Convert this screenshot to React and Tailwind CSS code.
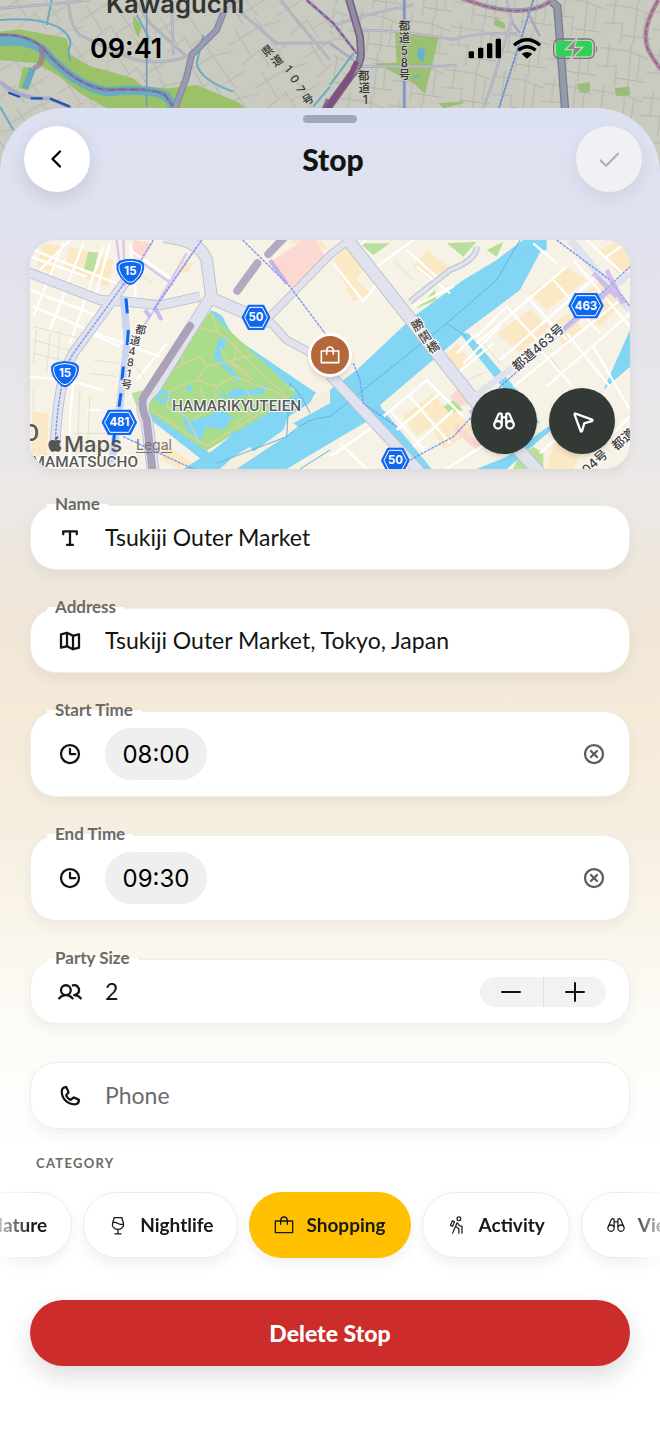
import { useState } from 'react';
import {
  PiBinoculars,
  PiBinocularsBold,
  PiCaretLeftBold,
  PiCheckBold,
  PiClockBold,
  PiLeaf,
  PiMapTrifoldBold,
  PiNavigationArrowBold,
  PiPersonSimpleHike,
  PiPhoneBold,
  PiTextTBold,
  PiUsersBold,
  PiWine,
  PiXCircleBold,
} from 'react-icons/pi';
import { FaApple } from 'react-icons/fa';

const CJK = "Inter, 'Noto Sans CJK JP', sans-serif";

function BagIcon({ className, weight = 4 }) {
  return (
    <svg viewBox="0 0 60 60" fill="none" stroke="currentColor" strokeWidth={weight} strokeLinecap="round" strokeLinejoin="round" className={className} aria-hidden="true">
      <path d="M4 18H56V53H4Z" />
      <path d="M20 28V18Q20 6 30 6T40 18V28" />
    </svg>
  );
}

function StatusIcons() {
  return (
    <svg viewBox="0 0 396 72" className="h-6 w-[132px]" aria-label="Signal, Wi-Fi and battery">
      <rect x="2" y="43" width="16" height="21" rx="4" />
      <rect x="30" y="32" width="16" height="32" rx="4" />
      <rect x="57" y="19" width="16" height="45" rx="4" />
      <rect x="83" y="5" width="16" height="59" rx="4" />
      <g fill="none" stroke="#000" strokeWidth="10">
        <path d="M138 25Q177 -8 216 25" />
        <path d="M151 40Q177 18 203 40" />
      </g>
      <path d="M161 51Q177 39 193 51L177 65Z" />
      <rect x="257" y="6" width="122" height="58" rx="17" fill="none" stroke="#777b76" strokeWidth="4" />
      <rect x="264" y="12" width="108" height="46" rx="11" fill="#30d158" />
      <path d="M384 26Q392 35 384 45Z" fill="#777b76" />
      <path d="M327 3L292 38H316L308 68L344 31H320Z" fill="#8a8a86" stroke="#c5d0bd" strokeWidth="4" />
    </svg>
  );
}

function BackdropMap() {
  return (
    <svg viewBox="0 0 1980 558" preserveAspectRatio="xMidYMin slice" className="h-[186px] w-full [grid-area:1/1]" aria-hidden="true">
      <defs>
        <pattern id="mesh" width="150" height="130" patternUnits="userSpaceOnUse" patternTransform="rotate(8)">
          <path d="M0 20H90L150 35M0 75L60 70V130M30 0V75M95 0L100 130M60 105H150M125 30V100" fill="none" stroke="#b3b4ae" strokeWidth="3" />
        </pattern>
        <pattern id="mesh-slant" width="170" height="150" patternUnits="userSpaceOnUse" patternTransform="rotate(-32)">
          <path d="M0 30H110L170 50M0 100L70 90V150M40 0V95M110 0L120 150M70 120H170" fill="none" stroke="#b6b7b1" strokeWidth="3" />
        </pattern>
      </defs>
      <rect width="1980" height="558" fill="#c9cac0" />
      <rect width="1000" height="558" fill="url(#mesh-slant)" />
      <rect x="1000" width="980" height="558" fill="url(#mesh)" />

      <path d="M0 95L60 88L200 115L212 165L270 198L400 235L430 260L505 265L590 255L720 310L740 330H330L240 280L180 230L110 190L0 180Z" fill="#9bc169" />
      <path d="M70 200L105 205L85 270L55 265ZM400 45L425 80L415 115L400 80Z" fill="#9bc169" />
      <path d="M0 125Q80 115 130 150Q220 255 320 275Q460 262 500 290L525 325" fill="none" stroke="#68adc0" strokeWidth="28" />
      <path d="M0 105Q80 100 130 145Q220 255 320 270Q460 262 495 285L520 320" fill="none" stroke="#7b86ad" strokeWidth="10" />
      <path d="M0 105Q80 100 130 145Q220 255 320 270Q460 262 495 285L520 320" fill="none" stroke="#8b4d80" strokeWidth="3" strokeDasharray="24 10" />
      <path d="M122 140Q138 190 100 206" fill="none" stroke="#95708d" strokeWidth="16" opacity=".6" />
      <path d="M98 205L75 265" stroke="#68a9bd" strokeWidth="20" />
      <g fill="none" stroke="#69acc2" strokeWidth="6">
        <path d="M0 60Q120 50 180 85Q225 115 205 150L210 185M140 75L155 0M0 320L40 390M610 105L590 190Q600 240 700 275M940 320L990 260M410 45L445 110L440 190" />
      </g>
      <g fill="none" stroke="#a9a9bd" strokeWidth="8">
        <path d="M0 25L180 10L270 0M205 0Q210 80 240 105Q350 160 410 180Q480 195 560 170M405 0L450 70L560 170M515 0L520 165M680 0L830 130L990 128M840 0L990 180M660 40L720 0" />
      </g>
      <g fill="none" stroke="#c3c4c4" strokeWidth="3">
        <path d="M0 25L180 10L270 0M205 0Q210 80 240 105Q350 160 410 180Q480 195 560 170M405 0L450 70L560 170M515 0L520 165M680 0L830 130L990 128M840 0L990 180M660 40L720 0" />
      </g>
      <path d="M440 0V320" stroke="#7898ba" strokeWidth="5" />
      <path d="M0 245Q60 300 150 295L215 325" fill="none" stroke="#a7aaca" strokeWidth="11" />
      <path d="M25 278L60 291M92 295L128 295M150 296L210 320" stroke="#2255ae" strokeWidth="7" />
      <path d="M670 40L650 90L575 165L560 230L525 325" fill="none" stroke="#80829c" strokeWidth="20" />
      <path d="M670 40L650 90L575 165L560 230L525 325" fill="none" stroke="#999bb2" strokeWidth="14" />
      <path d="M975 335L990 300" stroke="#7c7a96" strokeWidth="26" />

      <path d="M1185 95L1317 112L1275 282L1235 245L1155 205L1120 190L1190 188Z" fill="#9bc071" />
      <path d="M1485 52L1515 72V88L1482 75ZM1730 252L1770 246V276L1740 278ZM1845 264L1888 260L1890 286L1848 288ZM1315 310L1390 304V310L1330 325Z" fill="#9bbd78" />
      <path d="M1252 155Q1265 130 1275 150L1270 185Q1250 180 1252 155ZM1235 240Q1240 222 1260 228Z" fill="#68b2cb" />
      <g fill="none" stroke="#a9aac0" strokeWidth="8">
        <path d="M1080 90Q1200 90 1360 118Q1450 95 1550 100M990 80Q1100 40 1240 15M1520 0L1535 60L1480 240L1450 325M1050 200L1290 200L1370 195M1535 65L1560 100M990 130L1060 180M1580 30L1620 110" />
      </g>
      <g fill="none" stroke="#c3c4c6" strokeWidth="3">
        <path d="M1080 90Q1200 90 1360 118Q1450 95 1550 100M990 80Q1100 40 1240 15M1520 0L1535 60L1480 240L1450 325M1050 200L1290 200L1370 195" />
      </g>
      <path d="M1213 0V330" stroke="#a0abc8" strokeWidth="11" />
      <path d="M1213 0V330" stroke="#6f8cc4" strokeWidth="4" />
      <path d="M1600 0L1495 330" stroke="#9fb0d0" strokeWidth="7" />
      <path d="M1600 0L1495 330" stroke="#5577bb" strokeWidth="3" strokeDasharray="8 4" />
      <path d="M990 255L1060 160" stroke="#69acc2" strokeWidth="6" />
      <path d="M1045 -10L1080 110L1083 160Q1085 190 1050 230L975 335" fill="none" stroke="#786581" strokeWidth="24" />
      <path d="M1045 -10L1080 110L1083 160Q1085 190 1050 230L975 335" fill="none" stroke="#938ba4" strokeWidth="14" />
      <path d="M1070 185L1050 230L975 335" fill="none" stroke="#7f4f80" strokeWidth="16" />
      <path d="M920 0L1000 70L1070 160" fill="none" stroke="#8b8db5" strokeWidth="9" />
      <path d="M920 0L1000 70L1070 160" fill="none" stroke="#a3447c" strokeWidth="4" strokeDasharray="16 8" />
      <path d="M1650 0L1672 20L1695 325" fill="none" stroke="#78808f" strokeWidth="25" />
      <path d="M1650 0L1672 20L1695 325" fill="none" stroke="#939ba8" strokeWidth="17" />
      <path d="M1380 -8Q1560 65 1650 5M1975 0Q1920 90 1945 150Q1960 180 1985 210" fill="none" stroke="#a391a3" strokeWidth="14" />
      <path d="M1460 16Q1560 46 1640 14M1985 130V200" fill="none" stroke="#69acc2" strokeWidth="5" />
      <path d="M1380 -8Q1560 65 1650 5M1975 0Q1920 90 1945 150Q1960 180 1985 210" fill="none" stroke="#b84b7d" strokeWidth="4" strokeDasharray="18 6" />

      <text x="318" y="38" fontSize="77" fontWeight="600" fill="#333532" fontFamily={CJK}>Kawaguchi</text>
      <g fill="#343633" stroke="#c9cac0" strokeWidth="5" paintOrder="stroke" fontFamily={CJK} fontSize="34" fontWeight="500" textAnchor="middle">
        <text transform="translate(810 162) rotate(-35)">県</text>
        <text transform="translate(838 192) rotate(-35)">道</text>
        <text transform="translate(856 214) rotate(50)">1</text>
        <text transform="translate(874 244) rotate(55)">0</text>
        <text transform="translate(891 274) rotate(60)">7</text>
        <text transform="translate(930 309) rotate(-30)">号</text>
        <text x="1213" y="89">都</text>
        <text x="1213" y="127">道</text>
        <text x="1213" y="164">5</text>
        <text x="1213" y="201">8</text>
        <text x="1213" y="238">号</text>
        <text x="1091" y="239">都</text>
        <text x="1093" y="276">道</text>
        <text x="1096" y="313">1</text>
      </g>
    </svg>
  );
}

function HexShield({ x, y, wide, label }) {
  return (
    <g transform={`translate(${x} ${y})`}>
      <path d={wide ? 'M-50 0L-32 -35H32L50 0L32 35H-32Z' : 'M-40 0L-22 -35H22L40 0L22 35H-22Z'} fill="#0f68f0" stroke="#0f68f0" strokeWidth="6" strokeLinejoin="round" />
      <path d={wide ? 'M-44 0L-28 -30H28L44 0L28 30H-28Z' : 'M-34 0L-19 -30H19L34 0L19 30H-19Z'} fill="none" stroke="#fff" strokeWidth="3" strokeLinejoin="round" />
      <text y="12" fontSize="34" fontWeight="700" fill="#fff" textAnchor="middle" fontFamily={CJK}>{label}</text>
    </g>
  );
}

function RouteShield({ x, y, label }) {
  return (
    <g transform={`translate(${x} ${y})`}>
      <path d="M-40 -24Q-36 -36 0 -38Q36 -36 40 -24Q44 6 12 33Q0 42 -12 33Q-44 6 -40 -24Z" fill="#0f68f0" stroke="#0f68f0" strokeWidth="3" />
      <path d="M-34 -20Q-30 -30 0 -32Q30 -30 34 -20Q37 4 10 28Q0 34 -10 28Q-37 4 -34 -20Z" fill="none" stroke="#fff" strokeWidth="3" />
      <text y="9" fontSize="34" fontWeight="700" fill="#fff" textAnchor="middle" fontFamily={CJK}>{label}</text>
    </g>
  );
}

function StopMap() {
  return (
    <svg viewBox="30 30 1800 687" preserveAspectRatio="xMidYMid slice" className="h-[229px] w-full [grid-area:1/1]" aria-hidden="true">
      <rect x="30" y="30" width="1800" height="687" fill="#f6f2e6" />

      {/* built-up blocks */}
      <g fill="#fbe8c4">
        <path d="M70 40L130 50L100 130L50 110ZM150 50L280 90L265 170L130 120ZM90 140L200 180L190 200L70 160ZM35 545L85 550L80 680H35ZM430 640L520 700L480 717L420 690ZM810 40L930 60L900 30H820ZM480 90L520 100L500 130L470 120Z" />
        <path d="M940 90L980 50L1040 100L1010 150L1050 190L1000 215ZM1180 110L1220 60L1290 110L1230 150ZM1530 190L1640 110L1700 150L1580 240ZM1430 310L1530 240L1590 290L1500 370ZM1640 230L1760 140L1820 210L1740 290ZM1600 280L1650 250L1690 300L1630 350ZM1740 60L1800 30L1830 60V120L1790 130ZM1270 380L1310 340L1350 390L1300 440ZM1150 560L1240 490L1290 550L1190 620ZM1240 600L1310 540L1360 600L1270 660ZM1600 640L1690 660L1660 717H1580ZM1120 640L1160 620L1190 660L1150 690Z" />
      </g>
      <g fill="#fbd9d2">
        <path d="M745 100L850 30H885L925 95L820 180ZM340 30L400 40L370 90L340 80ZM1290 500L1320 470L1360 520L1310 530ZM1310 580L1390 650L1370 660L1300 600Z" />
      </g>
      <g fill="#b9df9d">
        <path d="M205 65L235 68L220 125L192 118ZM1020 40H1110L1060 75ZM1280 40L1370 35L1330 80ZM1400 60L1450 35L1430 80ZM1190 235L1245 180L1250 210ZM1490 690L1540 650L1570 670V717H1480ZM1270 530L1300 510L1330 540L1290 550ZM335 490L370 480L350 530Z" />
      </g>

      {/* water */}
      <g fill="#82d5f3">
        <path d="M490 717L580 660L780 500L850 470L885 490L870 520L930 480L1010 420L1090 345L1180 260L1330 150L1430 90L1510 30H1580L1500 180L1340 300L1310 330L1080 525L1090 545L930 640L800 717Z" />
        <path d="M570 240Q610 250 615 275L640 320L890 490L850 500L600 310Z" />
        <path d="M385 540L600 690L560 700L380 560Z" />
        <path d="M1370 717L1460 680L1570 600L1750 480L1830 300V410L1750 480L1570 620L1460 717Z" />
        <path d="M1320 310H1345L1500 490L1560 580L1530 580L1430 450L1350 350Z" />
        <path d="M1060 545L1090 540L1235 717H1180L1090 600Z" />
        <path d="M1580 30H1510L1430 90L1580 60Z" />
      </g>
      <path d="M805 560L930 480V520L840 590L650 717H600L640 680L690 650L700 665L790 600Z" fill="#f4efdf" />
      <path d="M820 580L930 520V580L850 600Z" fill="#82d5f3" />
      <g fill="none" stroke="#62b4dc" strokeWidth="3">
        <path d="M590 700L800 620L810 460Q850 500 870 550M800 620Q860 560 930 560L1280 280L1430 150L1500 30M1280 280L1340 320M840 717L930 660" />
      </g>

      {/* Hamarikyu garden */}
      <path d="M570 245L600 275L830 490L790 520L560 662L385 545L380 515Z" fill="#a9dd89" />
      <g fill="#82d5f3">
        <path d="M595 325L625 325L600 380L665 450L655 455L580 385ZM590 490L620 495L640 475L700 480L745 465L730 490L640 505L600 500ZM480 540L510 570L560 560L600 540L640 560L610 600L560 590L540 635L500 600ZM640 600L660 615L620 640Z" />
        <circle cx="430" cy="500" r="22" />
        <circle cx="508" cy="475" r="9" />
      </g>
      <circle cx="430" cy="497" r="8" fill="#a9dd89" />
      <g fill="none" stroke="#dccfa3" strokeWidth="4" strokeLinejoin="round">
        <path d="M575 250L590 300L800 500L560 650L395 540M490 400L540 380L560 410L700 375M440 430L490 400L480 350L530 290L600 310M560 410L530 450L590 470L640 440L780 490M600 350L620 390L700 450M530 450L450 480L440 530L500 560L540 640M590 470L580 520L660 540L700 560M540 470L560 540L520 570M650 340L640 400L690 430M680 480L710 530L640 590" />
      </g>

      {/* streets */}
      <g fill="none" stroke="#fff" strokeWidth="7">
        <path d="M40 60L290 160M60 120L150 30M130 40L40 260M190 40L90 300M250 50L150 340M30 180L240 260M40 230L230 310M30 440L140 450L250 480M230 310L420 380M320 280L300 520M200 540H240M150 560V700M330 60L460 150M330 40L350 220M440 340L350 450M190 300L300 350M270 40L225 200M30 80L200 140M160 460L150 560" />
        <path d="M940 100L1030 215L1080 150M1000 60L1040 30M1070 110L1180 30M1190 110L1290 190M1160 60L1260 150M1370 340L1640 110M1440 390L1740 130M1370 320L1460 230L1560 340M1520 200L1640 330M1600 150L1740 310M1660 90L1830 290M1480 470L1800 210M1580 470L1830 250M1560 360L1660 470M1640 310L1770 470M1720 350L1830 540M1090 560L1220 450L1330 560M1130 600L1260 490M1180 650L1300 540M1110 540L1220 670M1170 500L1290 640M930 680L1060 590M960 640L1040 717M1330 400L1440 290M1310 370L1370 310M1180 230L1300 170M1700 30L1830 150M1760 80L1830 30M1640 480L1740 600M1560 670L1680 560M1750 640L1830 560M1300 440L1420 340M1280 717L1400 640M1540 40L1610 100" />
      </g>
      <g fill="none" stroke="#e0e1d0" strokeWidth="3">
        <path d="M40 330L180 370M50 300L40 400M90 310L80 430M180 480L170 700M210 500L200 690M160 610H260M160 650H260M340 400L370 440M330 120L400 160M1120 90L1180 150M1340 450L1390 430M1590 380L1620 420M1540 270L1600 330M1390 340L1440 400M1740 590L1790 640M40 290L200 330M40 370L160 400M120 300L110 440M40 480V540M220 390L300 400M210 430L290 440" />
      </g>

      {/* arterial roads */}
      <g fill="none" stroke="#b9becd" strokeLinejoin="round">
        <path d="M20 125L240 210L330 216L420 226L540 200" strokeWidth="30" />
        <path d="M430 20Q540 30 560 90L575 205L690 255L750 275" strokeWidth="38" />
        <path d="M750 275L800 330L930 400" strokeWidth="26" />
        <path d="M740 270L930 75L1000 20" strokeWidth="24" />
        <path d="M570 205L400 480Q350 520 380 570L400 725" strokeWidth="38" />
        <path d="M320 150L160 370Q115 440 105 650" strokeWidth="32" />
        <path d="M980 25L1370 520L1560 730" strokeWidth="40" />
        <path d="M930 435L1200 725" strokeWidth="34" />
        <path d="M1170 215L1290 120Q1370 90 1370 50" strokeWidth="18" />
      </g>
      <g fill="none" stroke="#e0e2ed" strokeLinejoin="round">
        <path d="M20 125L240 210L330 216L420 226L540 200" strokeWidth="25" />
        <path d="M430 20Q540 30 560 90L575 205L690 255L750 275" strokeWidth="33" />
        <path d="M750 275L800 330L930 400" strokeWidth="21" />
        <path d="M740 270L930 75L1000 20" strokeWidth="19" />
        <path d="M570 205L400 480Q350 520 380 570L400 725" strokeWidth="33" />
        <path d="M320 150L160 370Q115 440 105 650" strokeWidth="27" />
        <path d="M980 25L1370 520L1560 730" strokeWidth="35" />
        <path d="M930 435L1200 725" strokeWidth="29" />
        <path d="M1170 215L1290 120Q1370 90 1370 50" strokeWidth="12" />
        <path d="M1350 510L1640 290L1830 130" strokeWidth="20" />
        <path d="M1650 30L1830 240" strokeWidth="24" />
      </g>
      <path d="M510 288L372 500Q360 525 380 570L398 725" fill="none" stroke="#aba2ba" strokeWidth="24" strokeLinecap="round" />
      <path d="M652 182L712 100M745 72L800 15" stroke="#b3a9c2" strokeWidth="24" strokeLinecap="round" />

      {/* rail lines */}
      <path d="M310 200L322 330L300 520L275 700" fill="none" stroke="#c8d6f5" strokeWidth="22" />
      <path d="M290 30L308 170M310 30L315 170M530 50L455 160L350 320M500 70L400 240M355 90L460 165" fill="none" stroke="#dac8e8" strokeWidth="7" />
      <path d="M318 205L322 250M325 300L322 345M310 410L306 450M303 490L297 530M285 600L280 640" stroke="#0d64e8" strokeWidth="9" />
      <path d="M40 30L20 130M320 150L160 370Q115 440 105 650M545 30L400 240M400 30L320 160M668 30L810 170L930 330M1000 400L1020 450L1030 520L1130 590M1170 690L1300 620L1420 490L1830 110M1610 30L1770 150L1830 230M310 620L520 717" fill="none" stroke="#7597f0" strokeWidth="4" strokeDasharray="9 3" />
      <path d="M1350 550L1420 490M1630 300L1780 170M1720 130L1790 200M1760 120L1810 220" stroke="#c3b0ea" strokeWidth="14" opacity=".7" />
      <path d="M750 90L800 160M375 240L390 260M405 235L425 270" stroke="#9e9bf0" strokeWidth="12" opacity=".6" />

      <RouteShield x={331} y={126} label="15" />
      <RouteShield x={135} y={433} label="15" />
      <HexShield x={708} y={262} label="50" />
      <HexShield x={1126} y={691} label="50" />
      <HexShield x={298} y={577} wide label="481" />
      <HexShield x={1698} y={227} wide label="463" />

      <g fill="#3f3f3f" stroke="#fff" strokeWidth="6" paintOrder="stroke" fontFamily={CJK} fontSize="33" fontWeight="500" textAnchor="middle">
        <text transform="translate(360 311) rotate(12)">都</text>
        <text transform="translate(343 344) rotate(12)">道</text>
        <text transform="translate(335 375) rotate(8)">4</text>
        <text transform="translate(330 409) rotate(8)">8</text>
        <text transform="translate(325 442) rotate(8)">1</text>
        <text transform="translate(318 475) rotate(8)">号</text>
        <text transform="translate(1200 296) rotate(-33)" fontSize="37">勝</text>
        <text transform="translate(1222 332) rotate(-33)" fontSize="37">鬨</text>
        <text transform="translate(1246 363) rotate(-33)" fontSize="37">橋</text>
        <text transform="translate(1563 363) rotate(-41)" fontSize="39">都道463号</text>
        <text transform="translate(1733 706) rotate(-41)" fontSize="38">04号</text>
        <text transform="translate(1818 638) rotate(-41)" fontSize="38">都道</text>
      </g>
      <g fill="#5b5b5b" stroke="#fff" strokeWidth="6" paintOrder="stroke" fontFamily="Roboto, sans-serif" fontWeight="500">
        <text x="650" y="544" fontSize="46" textAnchor="middle">HAMARIKYUTEIEN</text>
        <text x="354" y="712" fontSize="46" textAnchor="end">MAMATSUCHO</text>
        <text x="58" y="632" fontSize="72" textAnchor="end">O</text>
      </g>
    </svg>
  );
}

function Field({ id, label, icon: Icon, className = 'h-[65px]', children }) {
  return (
    <div className={`relative flex items-center rounded-[26px] border border-[#eeeeec] bg-white pr-[23px] pl-[27px] shadow-[0_6px_14px_rgba(0,0,0,0.05)] ${className}`}>
      {label && (
        <label htmlFor={id} className="absolute -top-3 left-4 rounded-t bg-linear-to-b from-transparent from-50% to-white to-50% px-2 text-[17px] leading-5 font-bold text-[#6b6b66]">
          {label}
        </label>
      )}
      <Icon className="mr-[23px] size-6 shrink-0 text-[#121512]" aria-hidden="true" />
      {children}
    </div>
  );
}

function TimeField({ id, label, value, onChange }) {
  return (
    <Field id={id} label={label} icon={PiClockBold} className="h-[86px]">
      <input
        id={id}
        type="text"
        inputMode="numeric"
        value={value}
        onChange={(e) => onChange(e.target.value)}
        className="h-[52px] w-[102px] rounded-full bg-[#efefef] text-center font-[Inter,sans-serif] text-[24px] text-black"
      />
      <button type="button" aria-label={`Clear ${label}`} onClick={() => onChange('')} className="ml-auto text-[#5c5c5c]">
        <PiXCircleBold className="size-6" />
      </button>
    </Field>
  );
}

function Chip({ icon: Icon, label, selected, onClick }) {
  return (
    <button
      type="button"
      aria-pressed={selected}
      onClick={onClick}
      className={`flex h-[66px] shrink-0 items-center gap-3 rounded-full border px-6 text-[19px] font-bold text-[#171a17] shadow-[0_6px_14px_rgba(0,0,0,0.06)] ${selected ? 'border-[#ffc000] bg-[#ffc000]' : 'border-[#ececec] bg-white'}`}
    >
      <Icon className="size-5" aria-hidden="true" />
      {label}
    </button>
  );
}

export default function App() {
  const [name, setName] = useState('Tsukiji Outer Market');
  const [address, setAddress] = useState('Tsukiji Outer Market, Tokyo, Japan');
  const [start, setStart] = useState('08:00');
  const [end, setEnd] = useState('09:30');
  const [party, setParty] = useState(2);
  const [phone, setPhone] = useState('');
  const [category, setCategory] = useState('Shopping');

  const chip = (label, icon) => (
    <Chip label={label} icon={icon} selected={category === label} onClick={() => setCategory(label)} />
  );

  return (
    <div className="min-h-screen overflow-hidden bg-white font-[Lato,sans-serif] text-[#121512]">
      <header className="grid">
        <BackdropMap />
        <div className="flex items-center justify-between self-start pt-[33px] pr-[60px] pl-[90px] [grid-area:1/1]">
          <time className="font-[Inter,sans-serif] text-[27px] leading-8 font-semibold text-black">09:41</time>
          <StatusIcons />
        </div>
      </header>

      <main className="relative -mt-[78px] rounded-t-[64px] bg-[linear-gradient(to_bottom,#dce1f2_0px,#e1e2ee_130px,#ebe8e6_380px,#efe6d8_510px,#f5ead8_600px,#f6efe1_730px,#fbf6ed_830px,#fdfbf6_910px,#ffffff_1040px)] pt-[7px] pb-[68px]">
        <div className="mx-auto h-2 w-[54px] rounded-full bg-[#a2a8b8]" />
        <div className="mt-[3px] flex items-center justify-between pr-[18px] pl-6">
          <button type="button" aria-label="Back" className="flex size-[66px] items-center justify-center rounded-full bg-white text-black shadow-[0_6px_18px_rgba(40,40,80,0.14)]">
            <PiCaretLeftBold className="size-6" />
          </button>
          <h1 className="text-[30px] font-black">Stop</h1>
          <button type="button" disabled aria-label="Save" className="flex size-[66px] items-center justify-center rounded-full bg-[#f0f0f5] text-[#b0b0b4] shadow-[0_6px_18px_rgba(40,40,80,0.08)]">
            <PiCheckBold className="size-6" />
          </button>
        </div>

        <div className="px-[30px]">
          <section aria-label="Map" className="mt-12 grid overflow-hidden rounded-[26px] shadow-[0_4px_12px_rgba(0,0,0,0.06)]">
            <StopMap />
            <span className="z-10 flex size-11 items-center justify-center place-self-center rounded-full border-3 border-white bg-[#b5673c] text-white shadow-md [grid-area:1/1]">
              <BagIcon className="size-5" weight={5} />
            </span>
            <div className="flex items-end justify-between pr-[15px] pb-[15px] pl-4 [grid-area:1/1]">
              <div className="-mb-2 flex items-center text-[#555]">
                <FaApple className="size-[18px]" aria-hidden="true" />
                <span className="font-[Inter,sans-serif] text-[22px] leading-9 font-medium">Maps</span>
                <a href="#legal" className="ml-[14px] font-[Inter,sans-serif] text-[14px] text-[#777] underline underline-offset-2">Legal</a>
              </div>
              <div className="flex gap-3">
                <button type="button" aria-label="Look around" className="flex size-[66px] items-center justify-center rounded-full bg-[#333a36] text-white shadow-md">
                  <PiBinocularsBold className="size-6" />
                </button>
                <button type="button" aria-label="Directions" className="flex size-[66px] items-center justify-center rounded-full bg-[#333a36] text-white shadow-md">
                  <PiNavigationArrowBold className="size-6" />
                </button>
              </div>
            </div>
          </section>

          <form className="mt-9 flex flex-col gap-[38px] text-[23px]" onSubmit={(e) => e.preventDefault()}>
            <Field id="name" label="Name" icon={PiTextTBold}>
              <input id="name" type="text" value={name} onChange={(e) => setName(e.target.value)} className="min-w-0 flex-1" />
            </Field>
            <Field id="address" label="Address" icon={PiMapTrifoldBold}>
              <input id="address" type="text" value={address} onChange={(e) => setAddress(e.target.value)} className="min-w-0 flex-1" />
            </Field>
            <TimeField id="start" label="Start Time" value={start} onChange={setStart} />
            <TimeField id="end" label="End Time" value={end} onChange={setEnd} />
            <Field id="party" label="Party Size" icon={PiUsersBold}>
              <output id="party">{party}</output>
              <div className="ml-auto flex h-[30px] w-[126px] divide-x divide-[#dcdfdc] overflow-hidden rounded-full bg-[#f0f3f1]">
                <button type="button" aria-label="Decrease party size" onClick={() => setParty(Math.max(1, party - 1))} className="flex flex-1 items-center justify-center">
                  <svg viewBox="0 0 20 20" className="size-5" stroke="#111" strokeWidth="2" strokeLinecap="round"><path d="M1 10H19" /></svg>
                </button>
                <button type="button" aria-label="Increase party size" onClick={() => setParty(party + 1)} className="flex flex-1 items-center justify-center">
                  <svg viewBox="0 0 20 20" className="size-5" stroke="#111" strokeWidth="2" strokeLinecap="round"><path d="M1 10H19M10 1V19" /></svg>
                </button>
              </div>
            </Field>
            <Field icon={PiPhoneBold} className="h-[67px]">
              <input type="tel" aria-label="Phone" placeholder="Phone" value={phone} onChange={(e) => setPhone(e.target.value)} className="min-w-0 flex-1 placeholder:text-[#6b6b6b]" />
            </Field>
          </form>

          <h2 className="mt-6 pl-[6px] text-[13px] leading-5 font-bold tracking-widest text-[#6b6b66]">CATEGORY</h2>
        </div>

        <div className="grid grid-cols-[1fr_auto_1fr] gap-[11px] overflow-hidden pt-[19px] pb-[21px] [mask-image:linear-gradient(to_right,rgba(0,0,0,0.3),#000_32px,#000_calc(100%-32px),rgba(0,0,0,0.3))]">
          <div className="flex min-w-0 justify-end gap-[11px]">
            {chip('Nature', PiLeaf)}
            {chip('Nightlife', PiWine)}
          </div>
          {chip('Shopping', BagIcon)}
          <div className="flex min-w-0 gap-[11px]">
            {chip('Activity', PiPersonSimpleHike)}
            {chip('Viewpoint', PiBinoculars)}
          </div>
        </div>

        <div className="px-[30px] pt-[21px]">
          <button type="button" className="h-[66px] w-full rounded-full bg-[#cc2d2a] text-[23px] font-black text-white shadow-[0_10px_24px_rgba(0,0,0,0.14)]">
            Delete Stop
          </button>
        </div>
      </main>
    </div>
  );
}
